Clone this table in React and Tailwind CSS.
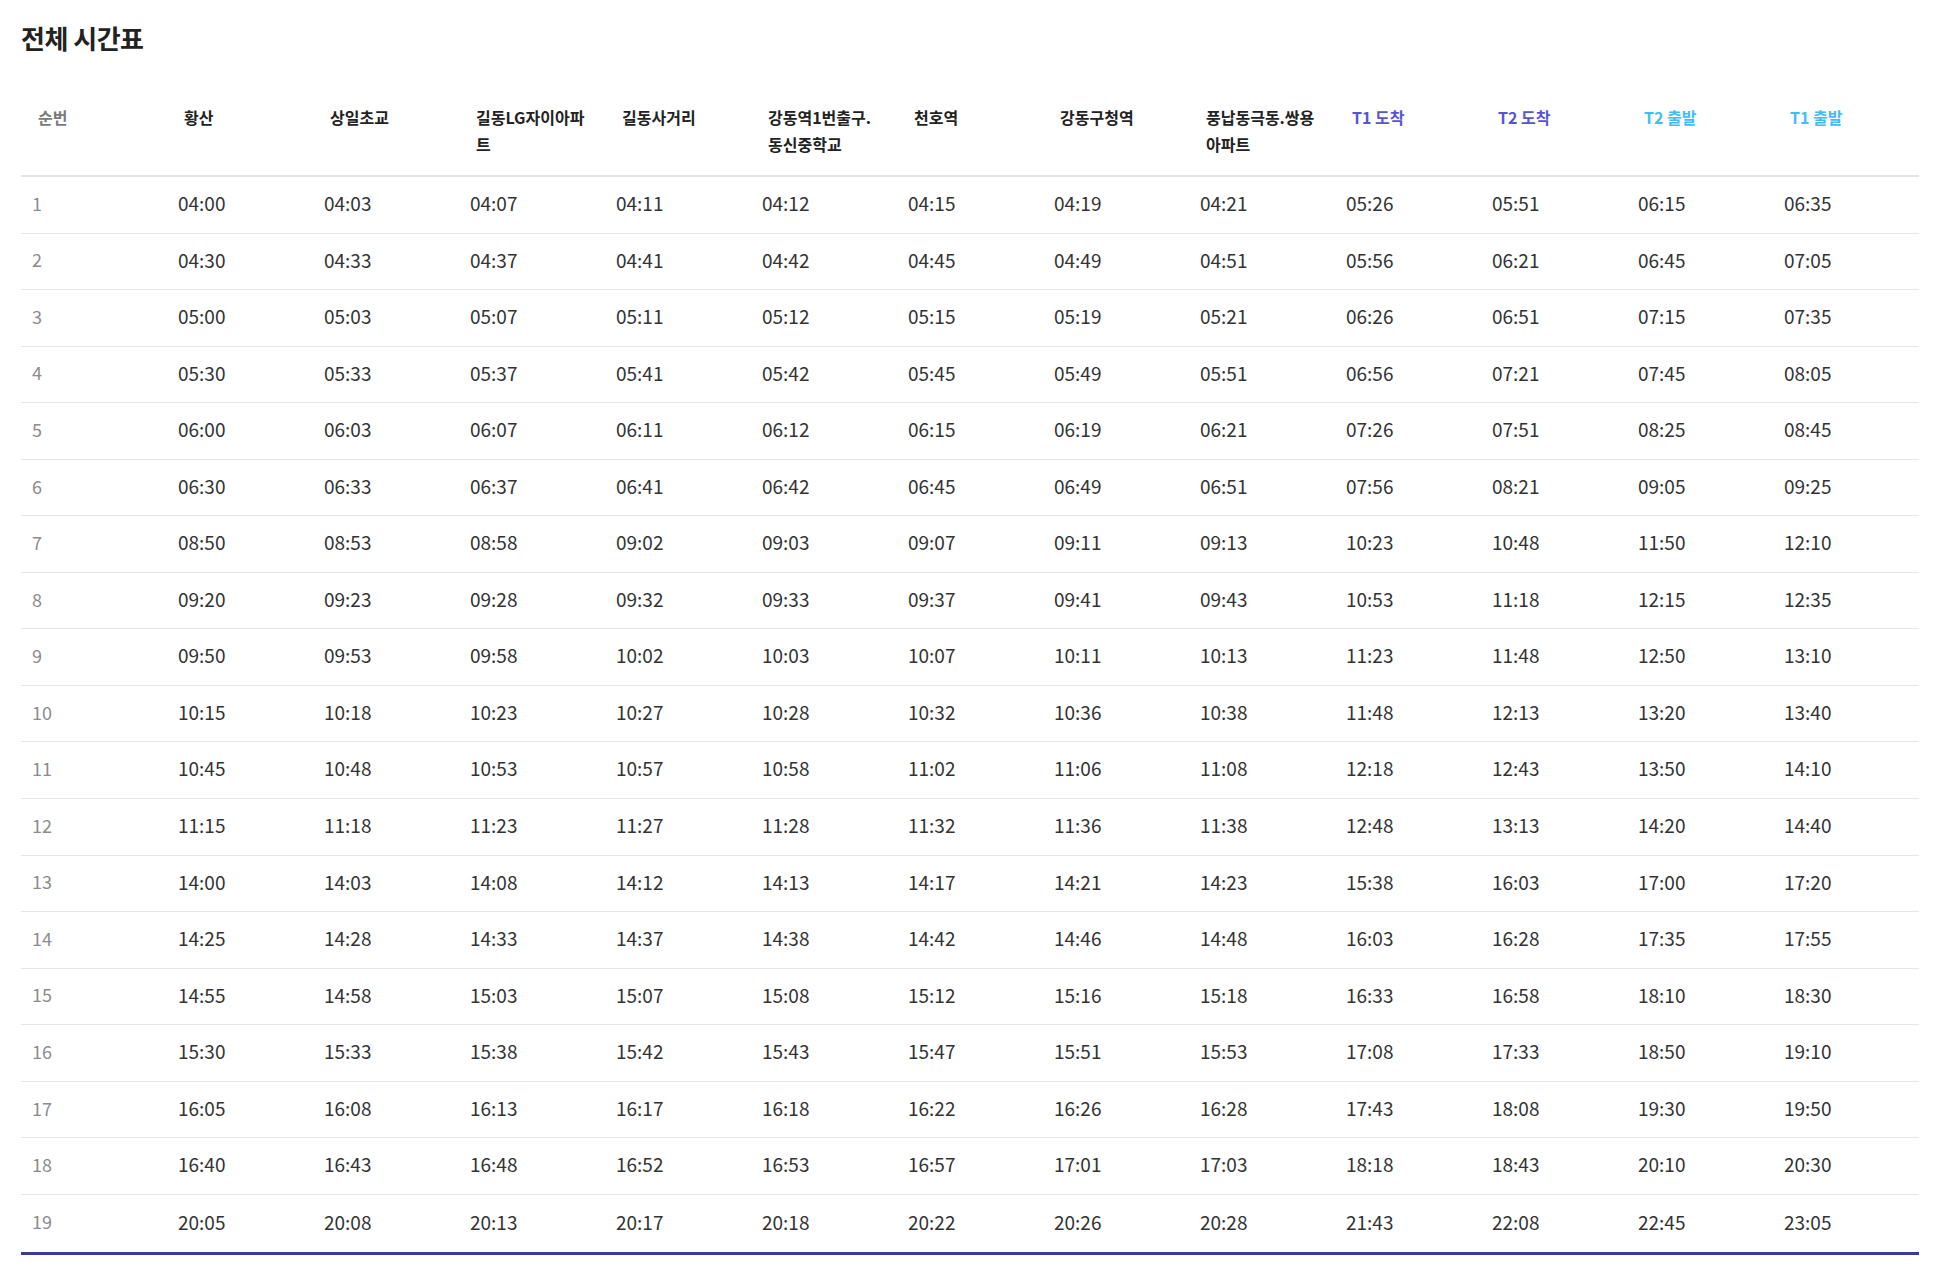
import React from "react";

const headers = [
  { t: "순번", c: "text-[#7a7a7a]" },
  { t: "황산", c: "text-[#222]" },
  { t: "상일초교", c: "text-[#222]" },
  { t: "길동LG자이아파트", c: "text-[#222]" },
  { t: "길동사거리", c: "text-[#222]" },
  { t: "강동역1번출구.동신중학교", c: "text-[#222]" },
  { t: "천호역", c: "text-[#222]" },
  { t: "강동구청역", c: "text-[#222]" },
  { t: "풍납동극동.쌍용아파트", c: "text-[#222]" },
  { t: "T1 도착", c: "text-[#5655cf]" },
  { t: "T2 도착", c: "text-[#5655cf]" },
  { t: "T2 출발", c: "text-[#3fbef6]" },
  { t: "T1 출발", c: "text-[#3fbef6]" },
];

const raw = `04:00 04:03 04:07 04:11 04:12 04:15 04:19 04:21 05:26 05:51 06:15 06:35
04:30 04:33 04:37 04:41 04:42 04:45 04:49 04:51 05:56 06:21 06:45 07:05
05:00 05:03 05:07 05:11 05:12 05:15 05:19 05:21 06:26 06:51 07:15 07:35
05:30 05:33 05:37 05:41 05:42 05:45 05:49 05:51 06:56 07:21 07:45 08:05
06:00 06:03 06:07 06:11 06:12 06:15 06:19 06:21 07:26 07:51 08:25 08:45
06:30 06:33 06:37 06:41 06:42 06:45 06:49 06:51 07:56 08:21 09:05 09:25
08:50 08:53 08:58 09:02 09:03 09:07 09:11 09:13 10:23 10:48 11:50 12:10
09:20 09:23 09:28 09:32 09:33 09:37 09:41 09:43 10:53 11:18 12:15 12:35
09:50 09:53 09:58 10:02 10:03 10:07 10:11 10:13 11:23 11:48 12:50 13:10
10:15 10:18 10:23 10:27 10:28 10:32 10:36 10:38 11:48 12:13 13:20 13:40
10:45 10:48 10:53 10:57 10:58 11:02 11:06 11:08 12:18 12:43 13:50 14:10
11:15 11:18 11:23 11:27 11:28 11:32 11:36 11:38 12:48 13:13 14:20 14:40
14:00 14:03 14:08 14:12 14:13 14:17 14:21 14:23 15:38 16:03 17:00 17:20
14:25 14:28 14:33 14:37 14:38 14:42 14:46 14:48 16:03 16:28 17:35 17:55
14:55 14:58 15:03 15:07 15:08 15:12 15:16 15:18 16:33 16:58 18:10 18:30
15:30 15:33 15:38 15:42 15:43 15:47 15:51 15:53 17:08 17:33 18:50 19:10
16:05 16:08 16:13 16:17 16:18 16:22 16:26 16:28 17:43 18:08 19:30 19:50
16:40 16:43 16:48 16:52 16:53 16:57 17:01 17:03 18:18 18:43 20:10 20:30
20:05 20:08 20:13 20:17 20:18 20:22 20:26 20:28 21:43 22:08 22:45 23:05`;

const rows = raw.split("\n").map((l) => l.trim().split(" "));

export default function App() {
  return (
    <div
      className="bg-white pl-[21px] pr-[20px] pt-[20px] min-h-[1278px]"
      style={{ fontFamily: '"Noto Sans CJK KR", "Noto Sans", sans-serif' }}
    >
      <h2 className="text-[26px] leading-[36px] font-bold text-[#222] tracking-[-0.5px]">
        전체 시간표
      </h2>
      <table className="mt-[30px] w-full table-fixed border-separate border-spacing-0">
        <thead>
          <tr>
            {headers.map((h, i) => (
              <th
                key={i}
                className={`align-top text-left font-bold text-[16px] leading-[27px] pl-[17px] pr-[17px] pt-[18px] pb-[17px] border-b-2 border-[#e4e4e4] ${h.c}`}
              >
                {h.t}
              </th>
            ))}
          </tr>
        </thead>
        <tbody>
          {rows.map((r, ri) => {
            const last = ri === rows.length - 1;
            return (
              <tr key={ri}>
                <td
                  className={`pl-[11px] pt-0 pb-[3px] align-middle text-[18px] text-[#8c8c8c] ${
                    last ? "h-[60px] border-b-[3px] border-[#3b3c98]" : "h-[56.55px] border-b border-[#e6e6e6]"
                  }`}
                >
                  {ri + 1}
                </td>
                {r.map((v, ci) => (
                  <td
                    key={ci}
                    className={`pl-[11px] pt-0 pb-[3px] align-middle text-[19px] text-[#333] ${
                      last ? "h-[60px] border-b-[3px] border-[#3b3c98]" : "h-[56.55px] border-b border-[#e6e6e6]"
                    }`}
                  >
                    {v}
                  </td>
                ))}
              </tr>
            );
          })}
        </tbody>
      </table>
    </div>
  );
}
